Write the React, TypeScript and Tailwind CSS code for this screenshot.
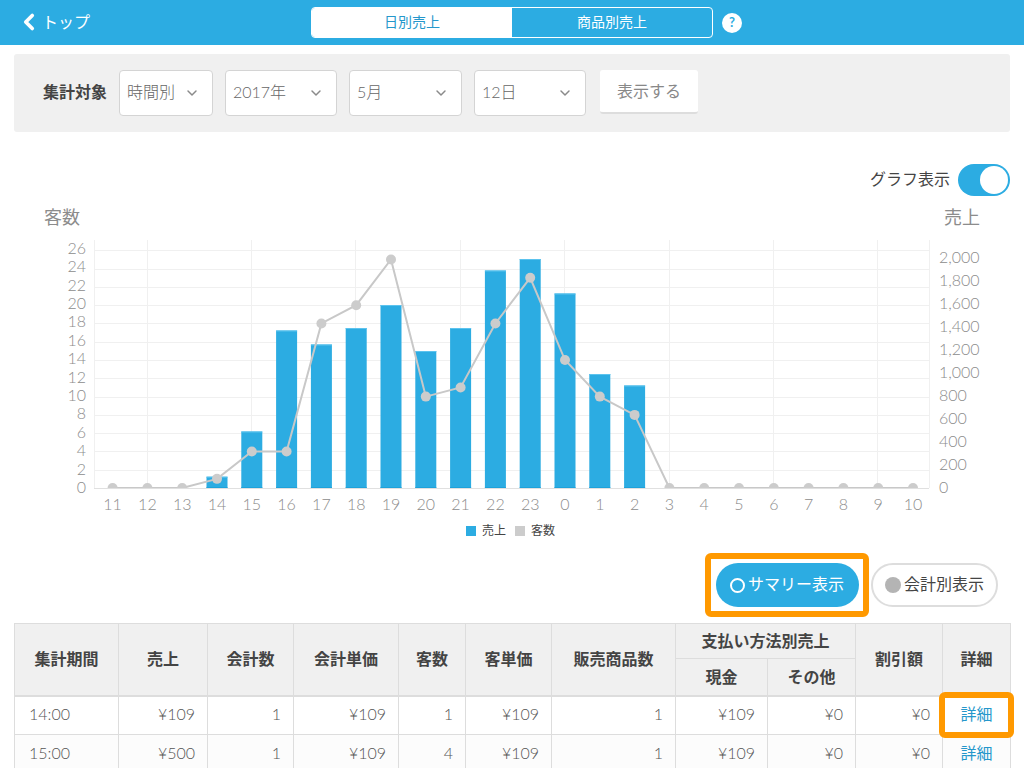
import { ChevronDown, ChevronLeft } from "lucide-react";

const sales = [
  { i: 3, top: 476.7 },
  { i: 4, top: 431.5 },
  { i: 5, top: 330.5 },
  { i: 6, top: 344.5 },
  { i: 7, top: 328 },
  { i: 8, top: 305 },
  { i: 9, top: 351 },
  { i: 10, top: 328 },
  { i: 11, top: 270.5 },
  { i: 12, top: 259 },
  { i: 13, top: 293.5 },
  { i: 14, top: 374 },
  { i: 15, top: 385.5 },
];

const customers = [0, 0, 0, 1, 4, 4, 18, 20, 25, 10, 11, 18, 23, 14, 10, 8, 0, 0, 0, 0, 0, 0, 0, 0];
const hours = [11, 12, 13, 14, 15, 16, 17, 18, 19, 20, 21, 22, 23, 0, 1, 2, 3, 4, 5, 6, 7, 8, 9, 10];
const leftTicks = [26, 24, 22, 20, 18, 16, 14, 12, 10, 8, 6, 4, 2, 0];
const rightTicks = ["2,000", "1,800", "1,600", "1,400", "1,200", "1,000", "800", "600", "400", "200", "0"];

const xAt = (i: number) => 112.6 + 34.8 * i;
const yAt = (v: number) => 488 - 9.14 * v;

const filters = [
  { label: "時間別", width: "w-[94px]" },
  { label: "2017年", width: "w-[112px]" },
  { label: "5月", width: "w-[113px]" },
  { label: "12日", width: "w-[112px]" },
];

const rows = [
  ["14:00", "¥109", "1", "¥109", "1", "¥109", "1", "¥109", "¥0", "¥0"],
  ["15:00", "¥500", "1", "¥109", "4", "¥109", "1", "¥109", "¥0", "¥0"],
];

function Chart() {
  return (
    <svg width={996} height={280} className="block">
      <defs>
        <clipPath id="plot">
          <rect x={94} y={236} width={836} height={252} />
        </clipPath>
      </defs>
      <g transform="translate(-14 -236)" fontWeight={300}>
        {leftTicks.map((t) => (
          <line key={t} x1={94} x2={929} y1={Math.round(yAt(t)) + 0.5} y2={Math.round(yAt(t)) + 0.5} stroke="#f0f0f0" />
        ))}
        {[94.5, 147.5, 251.5, 355.5, 460.5, 564.5, 669.5, 773.5, 877.5, 929.5].map((x) => (
          <line key={x} x1={x} x2={x} y1={240} y2={488} stroke="#f0f0f0" />
        ))}
        <line x1={94} x2={929} y1={488.5} y2={488.5} stroke="#e0e0e0" />
        {sales.map((b) => (
          <g key={b.i}>
            <rect x={xAt(b.i) - 10.5} y={b.top} width={21} height={488 - b.top} fill="#2cace2" />
            <rect x={xAt(b.i) - 10.5} y={b.top} width={21} height={1} fill="#5cc3ee" />
            <rect x={xAt(b.i) - 10.5} y={487} width={21} height={1} fill="#1ea2da" />
          </g>
        ))}
        <g clipPath="url(#plot)">
          <polyline
            points={customers.map((c, i) => `${xAt(i)},${yAt(c)}`).join(" ")}
            fill="none"
            stroke="#c8c8c8"
            strokeWidth={2}
          />
          {customers.map((c, i) => (
            <circle key={i} cx={xAt(i)} cy={yAt(c)} r={5} fill="#cccccc" />
          ))}
        </g>
        {leftTicks.map((t) => (
          <text key={t} x={86} y={493 - 9.2 * t} textAnchor="end" fontSize={16} fill="#8c8c8c">
            {t}
          </text>
        ))}
        {rightTicks.map((t, i) => (
          <text key={t} x={939} y={263 + 23 * i} fontSize={16} fill="#8c8c8c">
            {t}
          </text>
        ))}
        {hours.map((h, i) => (
          <text key={i} x={xAt(i)} y={510} textAnchor="middle" fontSize={16} fill="#8c8c8c">
            {h}
          </text>
        ))}
      </g>
    </svg>
  );
}

export default function App() {
  const headCell = "border border-[#dddddd] bg-[#f0f0f0] text-[16px] font-bold text-[#444444] text-center align-middle";
  const bodyCell = "border border-[#dddddd] text-[16px] font-light text-[#555555] pb-[2px]";

  return (
    <div
      className="w-[1024px] h-[768px] overflow-hidden bg-white"
      style={{ fontFamily: '"Lato", "Noto Sans CJK JP", sans-serif' }}
    >
      <header className="relative h-[45px] bg-[#2cace2] flex items-center justify-center text-white">
        <div className="absolute left-[16px] top-[9px] flex items-center">
          <ChevronLeft size={26} strokeWidth={3.4} />
          <span className="text-[16px]">トップ</span>
        </div>
        <div className="ml-[29px] flex items-center">
          <div className="flex w-[402px] h-[31px] rounded-[4px] border border-white overflow-hidden text-[14px]">
            <div className="w-[200px] bg-white text-[#2597cb] flex items-center justify-center pb-[2px]">日別売上</div>
            <div className="flex-1 flex items-center justify-center pb-[2px]">商品別売上</div>
          </div>
          <div className="ml-[9px] w-[20px] h-[20px] rounded-full bg-white text-[#2cace2] text-[13px] font-bold flex items-center justify-center">
            ?
          </div>
        </div>
      </header>

      <main className="px-[14px]">
        <section className="mt-[9px] h-[78px] rounded-[3px] bg-[#f0f0f0] flex items-center pl-[29px]">
          <span className="w-[76px] text-[16px] font-bold text-[#444444] pb-[2px]">集計対象</span>
          <div className="flex gap-[12px]">
            {filters.map((f) => (
              <div
                key={f.label}
                className={`${f.width} h-[46px] rounded-[4px] border border-[#d4d4d4] bg-white flex items-center justify-between pl-[7px] pr-[12px] text-[16px] font-light text-[#666666]`}
              >
                <span className="pb-[3px]">{f.label}</span>
                <ChevronDown size={16} strokeWidth={2.2} className="text-[#8a8a8a]" />
              </div>
            ))}
          </div>
          <button className="ml-[14px] mb-[2px] w-[98px] h-[44px] rounded-[3px] bg-white border-b-2 border-[#dddddd] text-[16px] text-[#888888]">
            表示する
          </button>
        </section>

        <div className="mt-[32px] h-[32px] flex items-center justify-end gap-[8px]">
          <span className="text-[16px] text-[#444444] pb-[2px]">グラフ表示</span>
          <div className="w-[52px] h-[32px] rounded-full bg-[#2cace2] flex items-center justify-end pr-[2px]">
            <div className="w-[28px] h-[28px] rounded-full bg-white" />
          </div>
        </div>

        <div className="mt-[9px] h-[31px] flex justify-between px-[30px] text-[18px] text-[#8c8c8c] leading-[24px]">
          <span>客数</span>
          <span>売上</span>
        </div>

        <Chart />

        <div className="mt-[6px] h-[18px] flex items-center justify-center gap-[9px] text-[12px] text-[#444444] pr-[3px]">
          <div className="flex items-center gap-[6px]">
            <span className="w-[10px] h-[10px] bg-[#2cace2]" />
            <span>売上</span>
          </div>
          <div className="flex items-center gap-[6px]">
            <span className="w-[10px] h-[10px] bg-[#cccccc]" />
            <span>客数</span>
          </div>
        </div>

        <div className="mt-[13px] h-[64px] flex items-center justify-end pr-[12px]">
          <div className="w-[164px] h-[64px] rounded-[6px] border-[6px] border-[#ff9900] flex items-center justify-center">
            <div className="w-[143px] h-[44px] rounded-full bg-[#2cace2] flex items-center justify-center gap-[3px] text-[16px] text-white">
              <span className="w-[15px] h-[15px] rounded-full border-2 border-white" />
              <span className="pb-[2px]">サマリー表示</span>
            </div>
          </div>
          <div className="ml-[2px] w-[127px] h-[44px] rounded-full border-2 border-[#dddddd] bg-white flex items-center justify-center gap-[3px] text-[16px] text-[#444444]">
            <span className="w-[16px] h-[16px] rounded-full bg-[#b4b4b4]" />
            <span className="pb-[2px]">会計別表示</span>
          </div>
        </div>

        <table className="mt-[6px] w-[996px] table-fixed border-collapse">
          <colgroup>
            {[104, 89, 86, 105, 67, 86, 124, 92, 88, 87, 68].map((w, i) => (
              <col key={i} style={{ width: w }} />
            ))}
          </colgroup>
          <thead>
            <tr className="h-[35px]">
              {["集計期間", "売上", "会計数", "会計単価", "客数", "客単価", "販売商品数"].map((h) => (
                <th key={h} rowSpan={2} className={`${headCell} border-b-2`}>
                  {h}
                </th>
              ))}
              <th colSpan={2} className={headCell}>
                支払い方法別売上
              </th>
              <th rowSpan={2} className={`${headCell} border-b-2`}>
                割引額
              </th>
              <th rowSpan={2} className={`${headCell} border-b-2`}>
                詳細
              </th>
            </tr>
            <tr className="h-[37px]">
              <th className={`${headCell} border-b-2`}>現金</th>
              <th className={`${headCell} border-b-2`}>その他</th>
            </tr>
          </thead>
          <tbody>
            {rows.map((r, ri) => (
              <tr key={r[0]} className={`h-[39px] ${ri === 1 ? "bg-[#fcfcfc]" : "bg-white"}`}>
                {r.map((c, ci) => (
                  <td key={ci} className={ci === 0 ? `${bodyCell} text-left pl-[14px]` : `${bodyCell} text-right pr-[12px]`}>
                    {c}
                  </td>
                ))}
                <td className="relative border border-[#dddddd] text-[16px] pb-[2px] text-center text-[#2597cb]">
                  詳細
                  {ri === 0 && (
                    <span className="absolute left-[-4px] right-[-4px] top-[-5px] bottom-[-4px] rounded-[6px] border-[6px] border-[#ff9900]" />
                  )}
                </td>
              </tr>
            ))}
          </tbody>
        </table>
      </main>
    </div>
  );
}
